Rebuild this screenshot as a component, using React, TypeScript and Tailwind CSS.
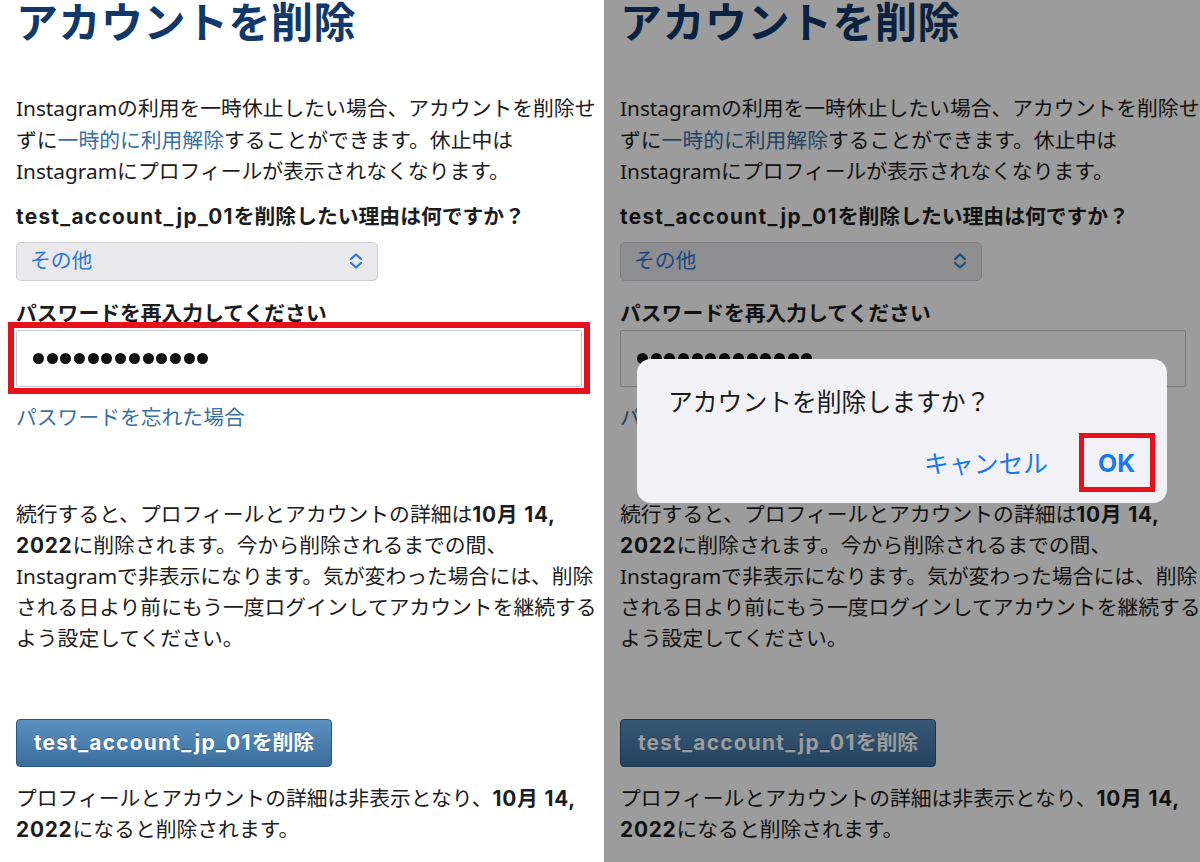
import React from "react";

/* ── Shared page content ───────────────────────────────── */
const font = "font-['Noto_Sans','Noto_Sans_CJK_JP',sans-serif]";
const boldFont = "font-['Inter','Noto_Sans_CJK_JP',sans-serif] font-bold";

function Dots() {
  return (
    <div className="flex items-center gap-[2.7px]">
      {Array.from({ length: 13 }).map((_, i) => (
        <span key={i} className="block w-[11px] h-[11px] rounded-full bg-[#111]" />
      ))}
    </div>
  );
}

function Chevrons() {
  return (
    <svg width="14" height="18" viewBox="0 0 14 18" fill="none">
      <path d="M2 7 L7 2.5 L12 7" stroke="#2a78d6" strokeWidth="2.2" strokeLinecap="round" strokeLinejoin="round" />
      <path d="M2 11 L7 15.5 L12 11" stroke="#2a78d6" strokeWidth="2.2" strokeLinecap="round" strokeLinejoin="round" />
    </svg>
  );
}

function PageContent({ highlight }: { highlight: boolean }) {
  return (
    <div className={`${font} w-[604px] px-4 text-[#1c1c1c] text-[20.8px]`}>
      {/* Title (page is scrolled, so it sits flush at the top) */}
      <h1 className="pt-[1px] text-[42px] leading-[42px] font-bold text-[#10386a] whitespace-nowrap tracking-[0.5px]">
        アカウントを削除
      </h1>

      <div className="mt-[50px] leading-[31.5px] whitespace-nowrap">
        <p>Instagramの利用を一時休止したい場合、アカウントを削除せ</p>
        <p>
          ずに<span className="text-[#3a6fa2]">一時的に利用解除</span>することができます。休止中は
        </p>
        <p>Instagramにプロフィールが表示されなくなります。</p>
      </div>

      <p className={`mt-[13px] leading-[32px] whitespace-nowrap ${boldFont}`}>
        <span className="tracking-[1.3px]">test_account_jp_01</span>を削除したい理由は何ですか？
      </p>

      <div className="mt-[9px] w-[362px] h-[39px] flex items-center justify-between pl-[13px] pr-[14px] bg-[#e9e9eb] border border-[#cfcfd2] rounded-[5px]">
        <span className="text-[#2a78d6]">その他</span>
        <Chevrons />
      </div>

      <p className={`mt-[19px] leading-[28px] whitespace-nowrap ${boldFont}`}>パスワードを再入力してください</p>

      <div className="relative mt-[2px]">
        <div className="h-[57px] w-[566px] flex items-center pl-[16px] bg-white border border-[#c9c9c9] rounded-[2px]">
          <Dots />
        </div>
        {highlight && (
          <div className="absolute -left-[8px] -top-[8px] w-[582px] h-[72px] border-[6px] border-[#e8101a]" />
        )}
      </div>

      <p className="mt-[15px] leading-[30px] text-[#3a6fa2] whitespace-nowrap">パスワードを忘れた場合</p>

      <div className="mt-[67px] leading-[31.2px] whitespace-nowrap">
        <p>
          続行すると、プロフィールとアカウントの詳細は<b className={`${boldFont} tracking-[0.8px]`}>10月 14,</b>
        </p>
        <p>
          <b className={`${boldFont} tracking-[0.8px]`}>2022</b>に削除されます。今から削除されるまでの間、
        </p>
        <p>Instagramで非表示になります。気が変わった場合には、削除</p>
        <p>される日より前にもう一度ログインしてアカウントを継続する</p>
        <p>よう設定してください。</p>
      </div>

      <button
        className={`mt-[64px] w-[316px] h-[48px] flex items-center justify-center rounded-[4px] border border-[#285682] bg-gradient-to-b from-[#5b92c2] to-[#3b6d9b] text-white text-[20.8px] whitespace-nowrap [text-shadow:0_-1px_0_rgba(0,0,0,0.25)] ${boldFont}`}
      >
        <span className="tracking-[1.3px]">test_account_jp_01</span>を削除
      </button>

      <div className="mt-[16px] leading-[31px] whitespace-nowrap">
        <p>
          プロフィールとアカウントの詳細は非表示となり、<b className={`${boldFont} tracking-[0.8px]`}>10月 14,</b>
        </p>
        <p>
          <b className={`${boldFont} tracking-[0.8px]`}>2022</b>になると削除されます。
        </p>
      </div>
    </div>
  );
}

/* ── Page ──────────────────────────────────────────────── */
export default function App() {
  return (
    <main className="w-[1200px] h-[862px] flex overflow-hidden bg-white">
      {/* Left: password entered */}
      <section className="w-[604px] shrink-0 h-full overflow-hidden bg-white">
        <PageContent highlight />
      </section>

      {/* Right: confirm dialog */}
      <section className="relative flex-1 h-full overflow-hidden bg-white">
        <PageContent highlight={false} />
        <div className="absolute inset-0 bg-black/[0.39]" />

        <div
          className={`${font} absolute left-[33px] top-[359px] w-[530px] h-[144px] rounded-[14px] bg-[#f2f2f6] flex flex-col`}
        >
          <p className="pl-[31px] pt-[26px] text-[24.8px] leading-[32px] text-[#1c1c1c] whitespace-nowrap">
            アカウントを削除しますか？
          </p>
          <div className="mt-auto mb-[24px] flex items-center justify-end gap-[50px] pr-[32px] text-[24.8px] text-[#1877f2] leading-[32px]">
            <span>キャンセル</span>
            <span className={`relative ${boldFont}`}>
              OK
              <span className="absolute -left-[19px] -right-[20px] -top-[14px] -bottom-[13px] border-[5px] border-[#e8101a]" />
            </span>
          </div>
        </div>
      </section>
    </main>
  );
}
